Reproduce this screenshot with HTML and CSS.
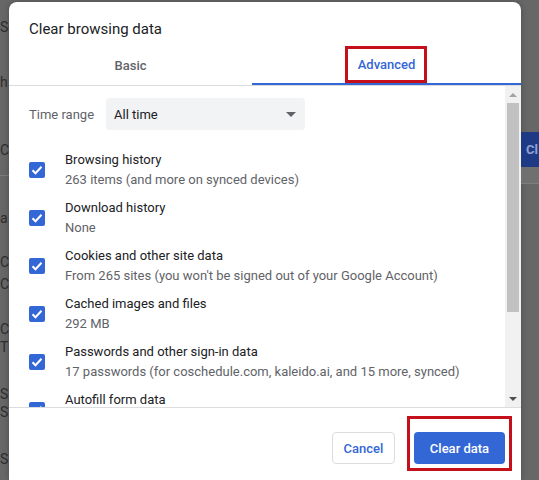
FILE: index.html
```html
<!DOCTYPE html>
<html>
<head>
<meta charset="utf-8">
<link rel="stylesheet" href="styles.css">
</head>
<body>
<div class="screen">
  <div class="bg-left">
    <span class="frag f1">Se</span>
    <span class="frag f2">h</span>
    <span class="frag f3">C</span>
    <span class="bg-line l1"></span>
    <span class="frag f4">a</span>
    <span class="frag f5">C</span>
    <span class="frag f6">C</span>
    <span class="frag f7">C</span>
    <span class="frag f8">T</span>
    <span class="frag f9">S</span>
    <span class="frag f10">S</span>
    <span class="frag f11">S</span>
  </div>

  <div class="dialog">
    <div class="title">Clear browsing data</div>
    <div class="tabs">
      <div class="tab">Basic</div>
      <div class="tab active"><span class="tab-label">Advanced<span class="mark mark-tab"></span></span></div>
    </div>

    <div class="body">
      <div class="content">
        <div class="range-row">
          <span class="range-label">Time range</span>
          <div class="select">
            <span>All time</span>
            <svg class="caret" width="10" height="5" viewBox="0 0 10 5"><path d="M0 0h10L5 5z" fill="#5f6368"/></svg>
          </div>
        </div>

        <div class="item">
          <span class="cb"><svg width="12" height="10" viewBox="0 0 12 10"><path d="M1.5 5.2l3 3 6-6.4" fill="none" stroke="#fff" stroke-width="2"/></svg></span>
          <div class="texts"><div class="t">Browsing history</div><div class="s">263 items (and more on synced devices)</div></div>
        </div>
        <div class="item">
          <span class="cb"><svg width="12" height="10" viewBox="0 0 12 10"><path d="M1.5 5.2l3 3 6-6.4" fill="none" stroke="#fff" stroke-width="2"/></svg></span>
          <div class="texts"><div class="t">Download history</div><div class="s">None</div></div>
        </div>
        <div class="item">
          <span class="cb"><svg width="12" height="10" viewBox="0 0 12 10"><path d="M1.5 5.2l3 3 6-6.4" fill="none" stroke="#fff" stroke-width="2"/></svg></span>
          <div class="texts"><div class="t">Cookies and other site data</div><div class="s">From 265 sites (you won't be signed out of your Google Account)</div></div>
        </div>
        <div class="item">
          <span class="cb"><svg width="12" height="10" viewBox="0 0 12 10"><path d="M1.5 5.2l3 3 6-6.4" fill="none" stroke="#fff" stroke-width="2"/></svg></span>
          <div class="texts"><div class="t">Cached images and files</div><div class="s">292 MB</div></div>
        </div>
        <div class="item">
          <span class="cb"><svg width="12" height="10" viewBox="0 0 12 10"><path d="M1.5 5.2l3 3 6-6.4" fill="none" stroke="#fff" stroke-width="2"/></svg></span>
          <div class="texts"><div class="t">Passwords and other sign-in data</div><div class="s">17 passwords (for coschedule.com, kaleido.ai, and 15 more, synced)</div></div>
        </div>
        <div class="item">
          <span class="cb"><svg width="12" height="10" viewBox="0 0 12 10"><path d="M1.5 5.2l3 3 6-6.4" fill="none" stroke="#fff" stroke-width="2"/></svg></span>
          <div class="texts"><div class="t">Autofill form data</div><div class="s">&nbsp;</div></div>
        </div>
      </div>

      <div class="scrollbar">
        <div class="sb-btn"><svg width="8" height="4" viewBox="0 0 8 4"><path d="M0 4h8L4 0z" fill="#a3a3a3"/></svg></div>
        <div class="sb-thumb"></div>
        <div class="sb-track"></div>
        <div class="sb-btn"><svg width="8" height="4" viewBox="0 0 8 4"><path d="M0 0h8L4 4z" fill="#505050"/></svg></div>
      </div>
    </div>

    <div class="footer">
      <button class="btn cancel">Cancel</button>
      <button class="btn primary">Clear data<span class="mark mark-btn"></span></button>
    </div>
  </div>

  <div class="bg-right">
    <div class="bg-btn">Cl</div>
    <div class="bg-band"></div>
  </div>
</div>
</body>
</html>
```

FILE: styles.css
```css
* { box-sizing: border-box; }
html, body { margin: 0; padding: 0; }
body {
  width: 539px;
  height: 480px;
  overflow: hidden;
  background: #676767;
  font-family: Roboto, "Liberation Sans", sans-serif;
}
.screen {
  display: flex;
  width: 539px;
  height: 480px;
}

/* dimmed page fragments behind the dialog */
.bg-left {
  width: 9px;
  flex: none;
  overflow: hidden;
  display: flex;
  flex-direction: column;
  color: #2e2e2e;
  font-size: 14px;
  line-height: 16px;
}
.frag { display: block; white-space: nowrap; }
.f1 { margin-top: 19px; }
.f2 { margin-top: 39px; }
.f3 { margin-top: 52px; }
.bg-line { display: block; height: 1px; background: #7c7c7c; margin-top: 17px; width: 9px; }
.f4 { margin-top: 34px; }
.f5 { margin-top: 28px; }
.f6 { margin-top: 6px; }
.f7 { margin-top: 29px; }
.f8 { margin-top: 2px; }
.f9 { margin-top: 31px; }
.f10 { margin-top: 2px; }
.f11 { margin-top: 31px; }

.bg-right {
  width: 18px;
  flex: none;
  padding-top: 132px;
  display: flex;
  flex-direction: column;
}
.bg-btn {
  height: 35px;
  background: #1f3a85;
  color: #8fa3d4;
  font-size: 13px;
  font-weight: 700;
  line-height: 35px;
  padding-left: 5px;
  overflow: hidden;
}
.bg-band {
  height: 17px;
  background: #707070;
  border-bottom: 1px solid #7e7e7e;
}

/* dialog */
.dialog {
  width: 512px;
  flex: none;
  margin-top: 2px;
  height: 478px;
  background: #fff;
  border-radius: 8px 8px 0 0;
  box-shadow: 0 0 6px rgba(0,0,0,0.25);
  display: flex;
  flex-direction: column;
}
.title {
  padding: 17px 20px 4px;
  font-size: 15px;
  line-height: 20px;
  color: #202124;
}
.tabs {
  display: grid;
  grid-template-columns: 243px 1fr;
  border-bottom: 1px solid #dadce0;
}
.tab {
  height: 42px;
  display: flex;
  align-items: center;
  justify-content: center;
  font-size: 13px;
  font-weight: 500;
  color: #5f6368;
  padding-top: 2px;
}
.tab.active {
  color: #3367d6;
  border-bottom: 2px solid #3367d6;
  margin-bottom: -1px;
}
.tab-label { position: relative; }
.mark {
  position: absolute;
  border: 3px solid #c4101a;
  pointer-events: none;
}
.mark-tab {
  left: -13px;
  right: -12px;
  top: -11px;
  bottom: -11px;
}

.body {
  display: flex;
  height: 322px;
  flex: none;
  border-bottom: 1px solid #dadce0;
}
.content {
  flex: 1;
  overflow: hidden;
  padding: 12px 0 0 20px;
}
.range-row {
  display: grid;
  grid-template-columns: 77px 199px;
  align-items: center;
  margin-bottom: 16px;
}
.range-label {
  font-size: 13px;
  color: #5f6368;
  white-space: nowrap;
}
.select {
  height: 32px;
  background: #f1f3f4;
  border-radius: 4px;
  display: flex;
  align-items: center;
  justify-content: space-between;
  padding: 0 9px 0 8px;
  font-size: 13px;
  color: #202124;
}

.item {
  display: flex;
  align-items: center;
  gap: 20px;
  height: 48px;
  padding: 4px 0;
}
.cb {
  width: 16px;
  height: 16px;
  flex: none;
  background: #3367d6;
  border-radius: 2px;
  display: flex;
  align-items: center;
  justify-content: center;
}
.texts { font-size: 13px; line-height: 20px; white-space: nowrap; }
.t { color: #202124; }
.s { color: #5f6368; }

.scrollbar {
  width: 16px;
  flex: none;
  background: #f1f1f1;
  display: flex;
  flex-direction: column;
}
.sb-btn {
  height: 17px;
  display: flex;
  align-items: center;
  justify-content: center;
}
.sb-thumb {
  height: 209px;
  margin: 0 2px;
  background: #c1c1c1;
}
.sb-track { flex: 1; }

.footer {
  display: flex;
  justify-content: flex-end;
  gap: 19px;
  padding: 24px 16px 0 0;
}
.btn {
  height: 32px;
  border-radius: 4px;
  font-family: Roboto, "Liberation Sans", sans-serif;
  font-size: 13px;
  font-weight: 500;
  position: relative;
  cursor: pointer;
}
.cancel {
  width: 63px;
  background: #fff;
  border: 1px solid #dadce0;
  color: #3367d6;
}
.primary {
  width: 91px;
  background: #3367d6;
  border: none;
  color: #fff;
}
.mark-btn {
  left: -7px;
  right: -7px;
  top: -16px;
  bottom: -7px;
}
```
